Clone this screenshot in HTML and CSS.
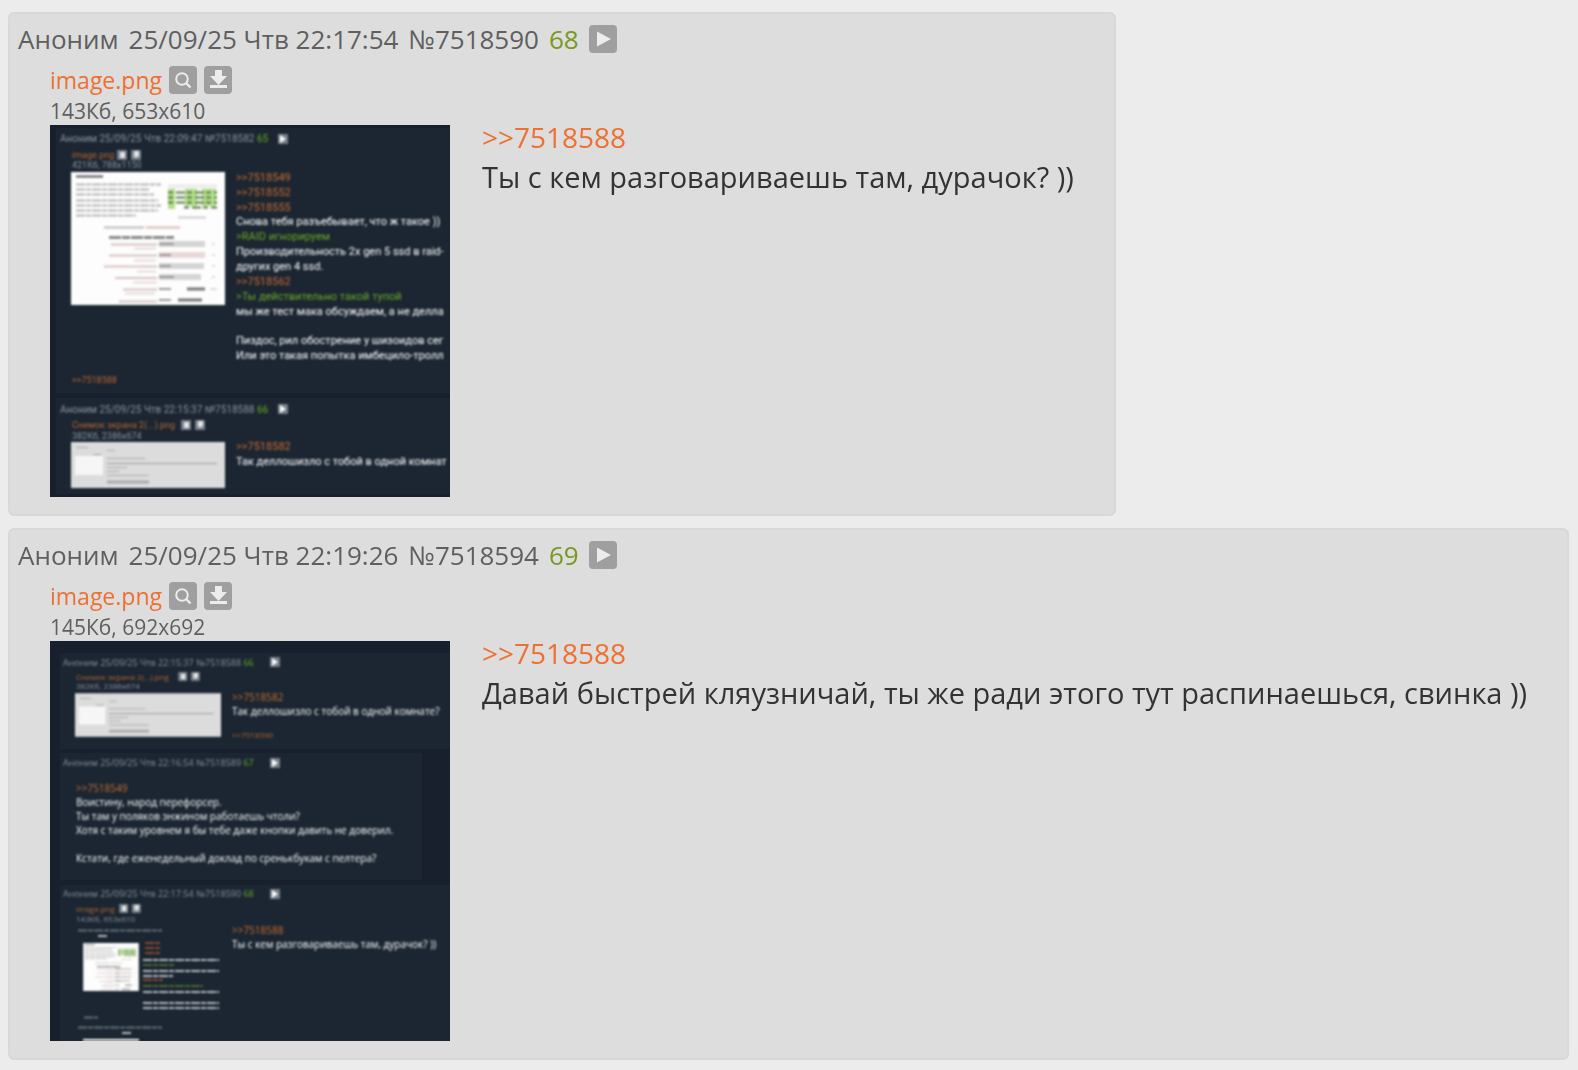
FILE: index.html
```html
<!DOCTYPE html>
<html lang="ru">
<head>
    <meta charset="UTF-8">
    <meta name="viewport" content="width=device-width, initial-scale=1.0">
    <title>Тред</title>
    <link rel="stylesheet" href="styles.css">
</head>
<body>
    <!-- shared icons -->
    <svg class="sprite" aria-hidden="true">
        <symbol id="icon-play" viewBox="0 0 28 28">
            <path d="M8 6.500 22 14 8 21.500z" fill="#ececec"/>
        </symbol>
        <symbol id="icon-search" viewBox="0 0 28 28">
            <circle cx="13" cy="13" r="5.800" fill="none" stroke="#ececec" stroke-width="2"/>
            <path d="M17 17l4.500 4.500" stroke="#ececec" stroke-width="2.400"/>
        </symbol>
        <symbol id="icon-download" viewBox="0 0 28 28">
            <path d="M11 4h7v6h5L14.500 19 6 10h5z" fill="#ececec"/>
            <path d="M6 19h17v3H6z" fill="#ececec"/>
        </symbol>
        <symbol id="mini-play" viewBox="0 0 10 10">
            <path d="M0 0h10v10H0z" fill="#77808a"/>
            <path d="M2 1l6 4-6 4z" fill="#fff"/>
        </symbol>
        <symbol id="mini-tools" viewBox="0 0 24 10">
            <path d="M0 0h10v10H0zM14 0h10v10H14z" fill="#77808a"/>
            <path d="M3 2h5v6H3zM17 1h5v4h1l-4 3-3-3h1z" fill="#e3e5e8"/>
        </symbol>
        <!-- small grey screenshot inside the thumbnails -->
        <symbol id="mini-shot" viewBox="0 0 154 46">
            <path d="M0 0h154v46H0z" fill="#dcdcdc"/>
            <path d="M4 14h28v19H4z" fill="#f6f6f6"/>
            <path d="M5 5.500h12M22 12.500h8" stroke="#aaa"/>
            <path d="M36 8.500h8M36 16.500h38M36 25.500h20M36 33.500h42M36 29.500h12" stroke="#aaa"/>
            <path d="M36 21.500h110" stroke="#999"/>
            <path d="M36 40h42" stroke="#aaa" stroke-width="3"/>
        </symbol>
        <!-- white page with a table and a bar chart -->
        <symbol id="mini-page" viewBox="0 0 154 133">
            <path d="M0 0h154v133H0z" fill="#fdfdfd"/>
            <path d="M5 4.500h27" stroke="#555" stroke-width="2"/>
            <path d="M5 12.500h85M5 17.500h74M5 22.500h78M5 28.500h82M5 33.500h85M5 38.500h82M5 43.500h60" stroke="#b4b4b4" stroke-width="2" stroke-dasharray="9 1 5 1"/>
            <path d="M97 12h49v5H97z" fill="#eee"/>
            <path d="M97 17h7v20h-7zM114 17h12v17h-12zM131 17h14v17h-14z" fill="#b5e08b"/>
            <path d="M97 20.500h49M97 25.500h49M97 30.500h49M113 35.500h33" stroke="#587a46" stroke-width="2" stroke-dasharray="5 3 9 2"/>
            <path d="M107 45.500h28" stroke="#ccc" stroke-width="2"/>
            <path d="M33 55.500h40" stroke="#bbb" stroke-width="2"/>
            <path d="M75 55.500h34" stroke="#dcb8b8" stroke-width="2"/>
            <path d="M38 65.500h65" stroke="#888" stroke-width="3" stroke-dasharray="12 1 8 1"/>
            <path d="M40 72.500h46M38 83.500h48M33 94.500h53M44 106h42M52 117.500h34M48 129.500h38" stroke="#d6c2c2" stroke-width="2"/>
            <path d="M63 76.500h22M63 88.500h22M66 99.500h19M62 110.500h24M54 121.500h30" stroke="#e8dada" stroke-width="2"/>
            <path d="M88 69h46v6H88zM88 91h45v6H88zM88 102h42v6H88z" fill="#d5d5d5"/>
            <path d="M88 80h46v6H88z" fill="#ead8d8"/>
            <path d="M88 72h15M88 83h12M88 94h12M88 105h15M88 117h12M88 128h12" stroke="#999" stroke-width="2"/>
            <path d="M116 117h18M107 128h24" stroke="#777" stroke-width="3"/>
            <path d="M141 72h3M141 83h3M141 94h3M141 105h3M139 117h7" stroke="#ddd" stroke-width="2"/>
        </symbol>
    </svg>

    <main class="thread">
        <article class="post" id="7518590">
            <header class="post-header">
                <span>Аноним</span>
                <time>25/09/25 Чтв 22:17:54</time>
                <span>№7518590</span>
                <span class="count">68</span>
                <button class="icon-btn" type="button" aria-label="Меню поста"><svg><use href="#icon-play"/></svg></button>
            </header>
            <div class="post-content">
                <figure class="file">
                    <figcaption>
                        <div class="file-name">
                            <a href="#">image.png</a>
                            <button class="icon-btn" type="button" aria-label="Поиск"><svg><use href="#icon-search"/></svg></button>
                            <button class="icon-btn" type="button" aria-label="Скачать"><svg><use href="#icon-download"/></svg></button>
                        </div>
                        <div class="file-info">143Кб, 653x610</div>
                    </figcaption>
                    <svg class="thumb" viewBox="0 0 400 372">
                        <rect class="bg-page" width="400" height="372"/>
                        <rect class="bg-post" x="6" y="3" width="400" height="265"/>
                        <rect class="bg-post" x="6" y="273" width="400" height="96"/>
                        <g class="soft">
                            <text class="head" x="10" y="17">Аноним 25/09/25 Чтв 22:09:47 №7518582 <tspan class="green">65</tspan></text>
                            <use href="#mini-play" x="228" y="9" width="10" height="10"/>
                            <text class="name" x="22" y="33">image.png</text>
                            <use href="#mini-tools" x="67" y="25" width="24" height="10"/>
                            <text class="info" x="22" y="43">421Кб, 788x1150</text>
                            <use href="#mini-page" x="21" y="47" width="154" height="133"/>
                            <g class="body">
                                <text class="ref" x="186" y="56">&gt;&gt;7518549</text>
                                <text class="ref" x="186" y="71">&gt;&gt;7518552</text>
                                <text class="ref" x="186" y="86">&gt;&gt;7518555</text>
                                <text x="186" y="100">Снова тебя разъебывает, что ж такое ))</text>
                                <text class="green" x="186" y="115">&gt;RAID игнорируем</text>
                                <text x="186" y="130">Производительность 2х gen 5 ssd в raid-</text>
                                <text x="186" y="145">других gen 4 ssd.</text>
                                <text class="ref" x="186" y="160">&gt;&gt;7518562</text>
                                <text class="green" x="186" y="175">&gt;Ты действительно такой тупой</text>
                                <text x="186" y="190">мы же тест мака обсуждаем, а не делла</text>
                                <text x="186" y="219">Пиздос, рил обострение у шизоидов сег</text>
                                <text x="186" y="234">Или это такая попытка имбецило-тролл</text>
                                <text class="ref" x="186" y="325">&gt;&gt;7518582</text>
                                <text x="186" y="340">Так деллошизло с тобой в одной комнат</text>
                            </g>
                            <text class="name" x="22" y="258">&gt;&gt;7518588</text>
                            <text class="head" x="10" y="288">Аноним 25/09/25 Чтв 22:15:37 №7518588 <tspan class="green">66</tspan></text>
                            <use href="#mini-play" x="228" y="279" width="10" height="10"/>
                            <text class="name" x="22" y="303">Снимок экрана 2(...).png</text>
                            <use href="#mini-tools" x="131" y="295" width="24" height="10"/>
                            <text class="info" x="22" y="314">382Кб, 2386x674</text>
                            <use href="#mini-shot" x="21" y="317" width="154" height="46"/>
                        </g>
                    </svg>
                </figure>
                <div class="message">
                    <a href="#7518588">&gt;&gt;7518588</a>
                    <p>Ты с кем разговариваешь там, дурачок? ))</p>
                </div>
            </div>
        </article>

        <article class="post" id="7518594">
            <header class="post-header">
                <span>Аноним</span>
                <time>25/09/25 Чтв 22:19:26</time>
                <span>№7518594</span>
                <span class="count">69</span>
                <button class="icon-btn" type="button" aria-label="Меню поста"><svg><use href="#icon-play"/></svg></button>
            </header>
            <div class="post-content">
                <figure class="file">
                    <figcaption>
                        <div class="file-name">
                            <a href="#">image.png</a>
                            <button class="icon-btn" type="button" aria-label="Поиск"><svg><use href="#icon-search"/></svg></button>
                            <button class="icon-btn" type="button" aria-label="Скачать"><svg><use href="#icon-download"/></svg></button>
                        </div>
                        <div class="file-info">145Кб, 692x692</div>
                    </figcaption>
                    <svg class="thumb" viewBox="0 0 400 400">
                        <rect class="bg-page" width="400" height="400"/>
                        <rect class="bg-post" x="10" y="12" width="400" height="96"/>
                        <rect class="bg-post" x="10" y="112" width="362" height="127"/>
                        <rect class="bg-post" x="10" y="244" width="400" height="160"/>
                        <g class="soft compact">
                            <text class="head" x="13" y="25">Аноним 25/09/25 Чтв 22:15:37 №7518588 <tspan class="green">66</tspan></text>
                            <use href="#mini-play" x="220" y="16" width="10" height="10"/>
                            <text class="name" x="26" y="39">Снимок экрана 2(...).png</text>
                            <use href="#mini-tools" x="128" y="31" width="22" height="9"/>
                            <text class="info" x="26" y="48">382Кб, 2386x674</text>
                            <use href="#mini-shot" x="25" y="52" width="146" height="44"/>
                            <text class="name" x="182" y="97">&gt;&gt;7518590</text>
                            <text class="head" x="13" y="125">Аноним 25/09/25 Чтв 22:16:54 №7518589 <tspan class="green">67</tspan></text>
                            <use href="#mini-play" x="220" y="117" width="10" height="10"/>
                            <g class="body">
                                <text class="ref" x="182" y="60">&gt;&gt;7518582</text>
                                <text x="182" y="74">Так деллошизло с тобой в одной комнате?</text>
                                <text class="ref" x="26" y="151">&gt;&gt;7518549</text>
                                <text x="26" y="165">Воистину, народ перефорсер.</text>
                                <text x="26" y="179">Ты там у поляков энжином работаешь чтоли?</text>
                                <text x="26" y="193">Хотя с таким уровнем я бы тебе даже кнопки давить не доверил.</text>
                                <text x="26" y="221">Кстати, где еженедельный доклад по сренькбукам с пелтера?</text>
                                <text class="ref" x="182" y="293">&gt;&gt;7518588</text>
                                <text x="182" y="307">Ты с кем разговариваешь там, дурачок? ))</text>
                            </g>
                            <text class="head" x="13" y="256">Аноним 25/09/25 Чтв 22:17:54 №7518590 <tspan class="green">68</tspan></text>
                            <use href="#mini-play" x="220" y="248" width="10" height="10"/>
                            <text class="name" x="26" y="271">image.png</text>
                            <use href="#mini-tools" x="69" y="263" width="22" height="9"/>
                            <text class="info" x="26" y="281">143Кб, 653x610</text>
                            <path class="line-grey" d="M28 289.500h84M28 386.500h84M34 376.500h14"/>
                            <path class="line-light" d="M48 295h10M72 392h10"/>
                            <use href="#mini-page" x="33" y="302" width="56" height="48"/>
                            <path class="line-red" d="M95 302h16M95 307h16M95 312h16M93 339h20"/>
                            <path class="line-green" d="M93 324h32M93 345h60"/>
                            <path class="line-light" d="M93 319h76M93 330h76M93 335h30M93 351h76M93 362h76M93 367h76"/>
                            <path d="M33 398h56v2H33z" fill="#fff"/>
                        </g>
                    </svg>
                </figure>
                <div class="message">
                    <a href="#7518588">&gt;&gt;7518588</a>
                    <p>Давай быстрей кляузничай, ты же ради этого тут распинаешься, свинка ))</p>
                </div>
            </div>
        </article>
    </main>
</body>
</html>
```

FILE: styles.css
```css
body {
    margin: 0;
    padding: 12px 8px;
    background-color: #ececec;
    color: #333;
    font-family: "Trebuchet MS", "Open Sans", "Noto Sans", sans-serif;
}

a {
    color: #ee7030;
    text-decoration: none;
}

.sprite {
    display: none;
}

.thread {
    display: flex;
    flex-direction: column;
    align-items: flex-start;
    gap: 12px;
}

.post {
    box-sizing: border-box;
    max-width: 100%;
    padding: 7px 40px 17px 8px;
    background-color: #ddd;
    border: 2px solid #d8d8d8;
    border-radius: 6px;
}

.post-header {
    display: flex;
    align-items: center;
    gap: 10px;
    height: 36px;
    color: #5f5f5f;
    font-size: 26px;
}

.count {
    color: #789922;
}

.icon-btn {
    width: 28px;
    height: 28px;
    padding: 0;
    border: none;
    border-radius: 4px;
    background-color: #9f9f9f;
    cursor: pointer;
}

.icon-btn svg {
    display: block;
    width: 28px;
    height: 28px;
}

.post-content {
    display: flex;
    gap: 32px;
    padding-left: 32px;
}

.file {
    flex: none;
    width: 400px;
    margin: 0;
}

.file-name {
    display: flex;
    align-items: center;
    gap: 7px;
    height: 45px;
    font-size: 23px;
}

.file-info {
    height: 23px;
    color: #5f5f5f;
    font-size: 21px;
    line-height: 18px;
}

.message {
    padding-top: 60px;
    font-size: 29px;
    line-height: 39px;
}

.message a {
    font-size: 28px;
}

.message p {
    margin: 0;
}

/* thumbnails */
.thumb {
    display: block;
    width: 100%;
    font-family: Roboto, sans-serif;
}

.bg-page {
    fill: #17202c;
}

.bg-post {
    fill: #1b2632;
}

.soft {
    filter: blur(1px);
}

.head,
.info {
    fill: #8a939c;
    font-size: 10px;
}

.info {
    font-size: 9px;
}

.name {
    fill: #b8642f;
    font-size: 9px;
}

.body {
    fill: #fff;
    font-size: 11px;
}

.body .ref {
    fill: #cc6c30;
}

.green,
.body .green {
    fill: #6aa826;
}

.compact {
    font-family: "Open Sans", sans-serif;
}

.compact .head {
    font-size: 9px;
}

.compact .name,
.compact .info {
    font-size: 8px;
}

.compact .body {
    font-size: 10px;
}

.line-grey,
.line-light,
.line-red,
.line-green {
    stroke: #66707a;
    stroke-width: 2px;
    stroke-dasharray: 9px 1px 5px 1px;
}

.line-light {
    stroke: #b5bac0;
}

.line-red {
    stroke: #8a4a30;
}

.line-green {
    stroke: #4a6a30;
}
```
